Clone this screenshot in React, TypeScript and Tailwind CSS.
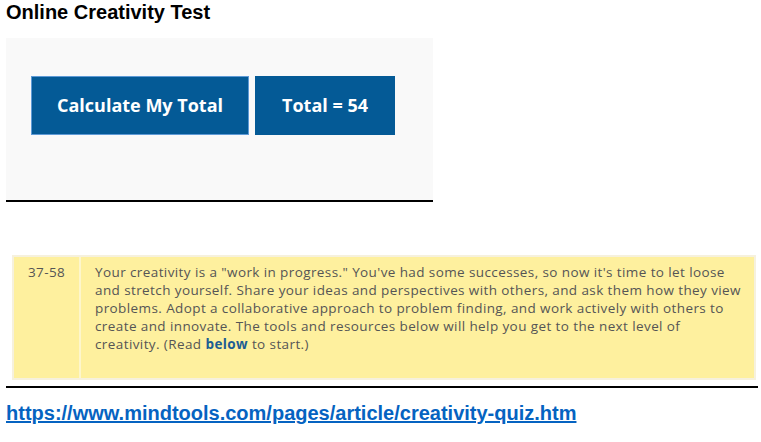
import React from "react";

// line breaks follow the reference's wrap
const lines = [
  'Your creativity is a "work in progress." You\'ve had some successes, so now it\'s time to let loose',
  "and stretch yourself. Share your ideas and perspectives with others, and ask them how they view",
  "problems. Adopt a collaborative approach to problem finding, and work actively with others to",
  "create and innovate. The tools and resources below will help you get to the next level of",
];

export default function App() {
  return (
    <div className="w-[761px] h-[442px] bg-white overflow-hidden">
      {/* Title */}
      <h1 className="pl-[6px] pt-[0px] text-[20px] leading-[24px] font-bold text-black font-['Liberation_Sans',Arial,sans-serif]">
        Online Creativity Test
      </h1>

      {/* Calculator panel */}
      <div className="ml-[6px] mt-[14px] w-[427px] h-[162px] bg-[#f9f9f9] pt-[38px] pl-[25px] flex gap-[6px] items-start font-['Open_Sans',sans-serif]">
        <button className="w-[218px] h-[59px] bg-[#045a96] border border-[#5e9ad6] text-white text-[18px] font-bold">
          Calculate My Total
        </button>
        <div className="w-[140px] h-[59px] bg-[#045a96] text-white text-[18px] font-bold flex items-center justify-center">
          Total = 54
        </div>
      </div>
      <div className="ml-[6px] w-[427px] h-[2px] bg-black" />

      {/* Score band */}
      <div className="ml-[12px] mt-[53px] w-[744px] h-[125px] border-2 border-[#f6f1dd] flex bg-[#fef09e] text-[#555] text-[13.5px] leading-[18px] tracking-[0.4px] font-['Open_Sans',sans-serif]">
        <div className="w-[67px] border-r-2 border-[#fdf6cc] pl-[14px] pt-[6px]">37-58</div>
        <div className="flex-1 pl-[14px] pt-[6px] whitespace-nowrap">
          {lines.map((l) => (
            <div key={l}>{l}</div>
          ))}
          <div>
            creativity. (Read <span className="font-bold text-[#1c5d93]">below</span> to start.)
          </div>
        </div>
      </div>
      <div className="ml-[6px] mt-[6px] w-[752px] h-[2px] bg-black" />

      {/* Source link */}
      <a
        href="#"
        className="block pl-[6px] mt-[13px] text-[20px] leading-[24px] font-bold text-[#0563c1] underline font-['Liberation_Sans',Arial,sans-serif]"
      >
        https://www.mindtools.com/pages/article/creativity-quiz.htm
      </a>
    </div>
  );
}
